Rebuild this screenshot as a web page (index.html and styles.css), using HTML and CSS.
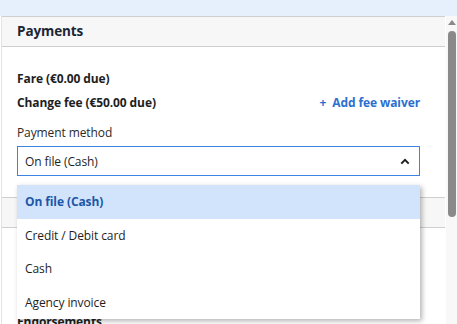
FILE: index.html
```html
<!DOCTYPE html>
<html lang="en">
<head>
  <meta charset="UTF-8">
  <title>Payments</title>
  <link rel="stylesheet" href="styles.css">
</head>
<body>

<div class="topband"></div>

<div class="page">
  <div class="content">
    <div class="section">
      <div class="section-head">Payments</div>
      <div class="section-body">
        <div class="fee-row"><strong>Fare (€0.00 due)</strong></div>
        <div class="fee-row">
          <strong>Change fee (€50.00 due)</strong>
          <a class="add-link" href="#">+&nbsp; Add fee waiver</a>
        </div>

        <div class="field">
          <label class="field-label">Payment method</label>
          <div class="select-wrap">
            <div class="select open">
              <span>On file (Cash)</span>
              <svg class="caret" width="10" height="7" viewBox="0 0 10 7">
                <path d="M1.3 5.6 L5 1.9 L8.7 5.6" fill="none" stroke="#1e1e1e" stroke-width="2"/>
              </svg>
            </div>
            <ul class="menu">
              <li class="active">On file (Cash)</li>
              <li>Credit / Debit card</li>
              <li>Cash</li>
              <li>Agency invoice</li>
            </ul>
          </div>
        </div>
      </div>
    </div>

    <div class="section">
      <div class="section-head"></div>
      <div class="section-body short">
        <div class="sub-title">Endorsements</div>
      </div>
    </div>
  </div>

  <div class="scrollbar">
    <div class="arrow"></div>
    <div class="thumb"></div>
  </div>
</div>

</body>
</html>
```

FILE: styles.css
```css
body {
  margin: 0;
  font-family: 'Open Sans', 'Noto Sans', sans-serif;
  font-size: 12px;
  letter-spacing: -0.1px;
  color: #1e1e1e;
  background: #fff;
  overflow: hidden;
}
.topband {
  height: 16px;
  background: #e6f0fc;
}
.page {
  display: flex;
  height: 308px;
}
.content {
  flex: 1;
  border-left: 1px solid #e4e4e4;
  margin-left: 1px;
}
.section-head {
  height: 29px;
  line-height: 29px;
  padding-left: 15px;
  background: #f7f7f7;
  border-top: 1px solid #cfcfcf;
  border-bottom: 1px solid #cfcfcf;
  font-size: 13.5px;
  font-weight: 700;
  color: #1b2635;
}
.section-body {
  padding: 19px 25px 21px 15px;
}
.section-body.short {
  padding-top: 85px;
}
.fee-row {
  display: flex;
  justify-content: space-between;
  align-items: center;
  height: 24px;
}
.fee-row strong {
  font-weight: 700;
}
.add-link {
  color: #2c6fcf;
  font-weight: 700;
  text-decoration: none;
}
.field {
  margin-top: 10px;
}
.field-label {
  display: block;
  line-height: 18px;
  margin-bottom: 4px;
  color: #2a2a2a;
}
.select-wrap {
  position: relative;
}
.select {
  height: 28px;
  border: 1.5px solid #3a84e4;
  display: flex;
  align-items: center;
  justify-content: space-between;
  padding: 0 9px 0 7px;
}
.caret {
  display: block;
}
.menu {
  position: absolute;
  top: 39px;
  left: 0;
  right: 0;
  margin: 0;
  padding: 0;
  list-style: none;
  background: #fff;
  box-shadow: 2px 2px 5px rgba(0, 0, 0, 0.3);
  z-index: 2;
}
.menu li {
  height: 33.5px;
  line-height: 33.5px;
  padding-left: 8px;
}
.menu li.active {
  background: #d2e4fb;
  color: #1b56a8;
  font-weight: 700;
}
.sub-title {
  font-weight: 700;
}
.scrollbar {
  width: 11px;
  margin-left: 1px;
  background: #f8f8f8;
}
.arrow {
  margin: 4px auto 0;
  width: 0;
  height: 0;
  border-left: 4px solid transparent;
  border-right: 4px solid transparent;
  border-bottom: 5px solid #8a8a8a;
}
.thumb {
  margin: 6px auto 0;
  width: 8px;
  height: 186px;
  border-radius: 4px;
  background: #8a8a8a;
}
```
